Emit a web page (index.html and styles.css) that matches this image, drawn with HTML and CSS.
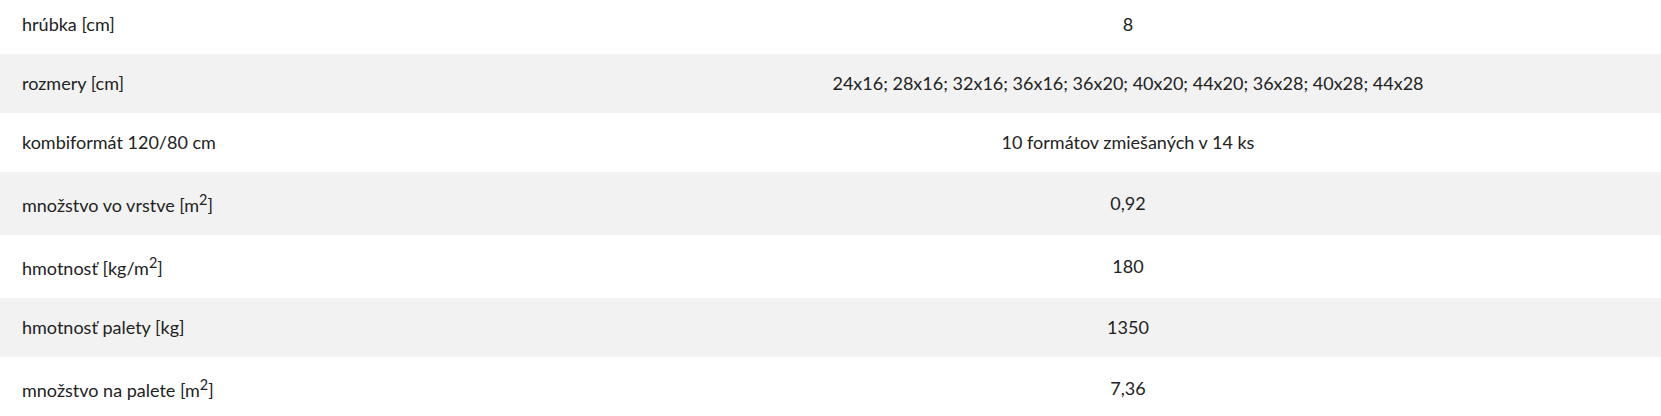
FILE: index.html
```html
<!DOCTYPE html>
<html lang="sk">
<head>
<meta charset="utf-8">
<title>Parametre</title>
<link rel="stylesheet" href="styles.css">
</head>
<body>
<table class="params">
  <tbody>
    <tr><td class="label">hrúbka [cm]</td><td class="value">8</td></tr>
    <tr class="alt"><td class="label">rozmery [cm]</td><td class="value">24x16; 28x16; 32x16; 36x16; 36x20; 40x20; 44x20; 36x28; 40x28; 44x28</td></tr>
    <tr><td class="label">kombiformát 120/80 cm</td><td class="value">10 formátov zmiešaných v 14 ks</td></tr>
    <tr class="alt"><td class="label">množstvo vo vrstve [m<sup>2</sup>]</td><td class="value">0,92</td></tr>
    <tr><td class="label">hmotnosť [kg/m<sup>2</sup>]</td><td class="value">180</td></tr>
    <tr class="alt"><td class="label">hmotnosť palety [kg]</td><td class="value">1350</td></tr>
    <tr><td class="label">množstvo na palete [m<sup>2</sup>]</td><td class="value">7,36</td></tr>
  </tbody>
</table>
</body>
</html>
```

FILE: styles.css
```css
html, body {
  margin: 0;
  padding: 0;
  background: #ffffff;
}
body {
  font-family: "Lato", "Open Sans", sans-serif;
  color: #222222;
  font-size: 18px;
}
.params {
  width: 100%;
  border-collapse: collapse;
  margin-top: -5px;
}
.params td {
  padding: 18px 22px;
  line-height: 23px;
  vertical-align: middle;
}
.params .label {
  width: 551px;
  text-align: left;
}
.params .value {
  text-align: center;
}
.params tr.alt td {
  background: #f2f2f2;
}
.params sup {
  font-size: 0.8em;
  line-height: 20px;
  vertical-align: 7px;
}
```
